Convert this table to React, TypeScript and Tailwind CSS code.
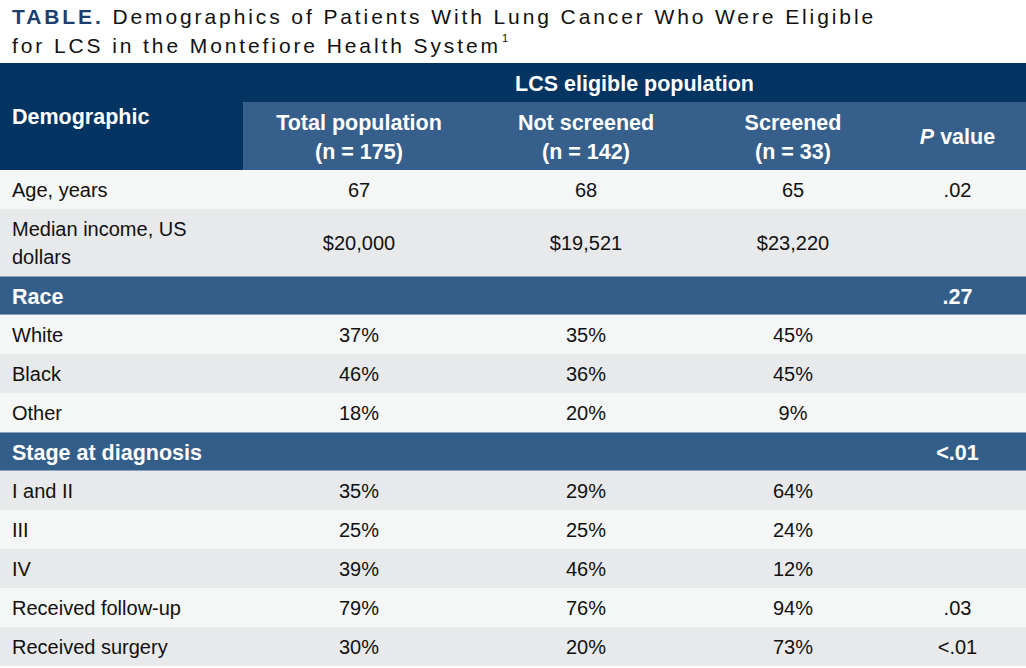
const cols = "grid grid-cols-[243px_232px_222px_192px_137px]";

type Row =
  | { kind: "data"; label: string[]; values: string[]; p?: string; shade: "light" | "grey" }
  | { kind: "band"; label: string; p: string };

const rows: Row[] = [
  { kind: "data", label: ["Age, years"], values: ["67", "68", "65"], p: ".02", shade: "light" },
  { kind: "data", label: ["Median income, US", "dollars"], values: ["$20,000", "$19,521", "$23,220"], shade: "grey" },
  { kind: "band", label: "Race", p: ".27" },
  { kind: "data", label: ["White"], values: ["37%", "35%", "45%"], shade: "light" },
  { kind: "data", label: ["Black"], values: ["46%", "36%", "45%"], shade: "grey" },
  { kind: "data", label: ["Other"], values: ["18%", "20%", "9%"], shade: "light" },
  { kind: "band", label: "Stage at diagnosis", p: "<.01" },
  { kind: "data", label: ["I and II"], values: ["35%", "29%", "64%"], shade: "grey" },
  { kind: "data", label: ["III"], values: ["25%", "25%", "24%"], shade: "light" },
  { kind: "data", label: ["IV"], values: ["39%", "46%", "12%"], shade: "grey" },
  { kind: "data", label: ["Received follow-up"], values: ["79%", "76%", "94%"], p: ".03", shade: "light" },
  { kind: "data", label: ["Received surgery"], values: ["30%", "20%", "73%"], p: "<.01", shade: "grey" },
];

function DataRow({ row }: { row: Extract<Row, { kind: "data" }> }) {
  const bg = row.shade === "light" ? "bg-[#f5f6f6]" : "bg-[#e8e9eb]";
  const tall = row.label.length > 1;
  return (
    <div className={`${cols} ${bg} ${tall ? "h-[67px]" : "h-[39px]"} text-[20px] text-[#111]`}>
      <div className="flex flex-col justify-center pl-3 leading-[28px]">
        {row.label.map((l) => (
          <span key={l}>{l}</span>
        ))}
      </div>
      {row.values.map((v, i) => (
        <div key={i} className="flex items-center justify-center">
          {v}
        </div>
      ))}
      <div className="flex items-center justify-center">{row.p ?? ""}</div>
    </div>
  );
}

function BandRow({ row }: { row: Extract<Row, { kind: "band" }> }) {
  return (
    <div className={`${cols} h-[39px] border-y border-[#8ba2bc] bg-[#345e8a] pt-[3px] text-[21.5px] font-bold text-white`}>
      <div className="col-span-4 flex items-center pl-3">{row.label}</div>
      <div className="flex items-center justify-center">{row.p}</div>
    </div>
  );
}

export default function App() {
  return (
    <div className="w-[1026px] h-[668px] overflow-hidden bg-white font-['Liberation_Sans',Arial,sans-serif]">
      <h1 className="pt-[2px] pl-3 mb-[3px] text-[21px] leading-[29px] tracking-[2.9px] text-[#111]">
        <span className="font-bold text-[#1c3f6f]">TABLE.</span> Demographics of Patients With Lung Cancer Who Were Eligible
        <br />
        for LCS in the Montefiore Health System<sup className="text-[11px] ml-[1px] align-[6px] tracking-normal">1</sup>
      </h1>

      <div className={`${cols} bg-[#033462] text-white font-bold text-[21.5px]`}>
        <div className="row-span-2 flex items-center pl-3 pt-[2px]">Demographic</div>
        <div className="col-span-4 flex h-[39px] items-center justify-center pt-[4px]">LCS eligible population</div>
        <div className="col-span-4 grid grid-cols-[232px_222px_192px_137px] h-[68px] bg-[#365f8c] pt-[3px] leading-[29px]">
          <div className="flex flex-col items-center justify-center">
            <span>Total population</span>
            <span>(n = 175)</span>
          </div>
          <div className="flex flex-col items-center justify-center">
            <span>Not screened</span>
            <span>(n = 142)</span>
          </div>
          <div className="flex flex-col items-center justify-center">
            <span>Screened</span>
            <span>(n = 33)</span>
          </div>
          <div className="flex items-center justify-center">
            <span>
              <i>P</i> value
            </span>
          </div>
        </div>
      </div>

      {rows.map((r, i) =>
        r.kind === "data" ? <DataRow key={i} row={r} /> : <BandRow key={i} row={r} />
      )}
    </div>
  );
}
